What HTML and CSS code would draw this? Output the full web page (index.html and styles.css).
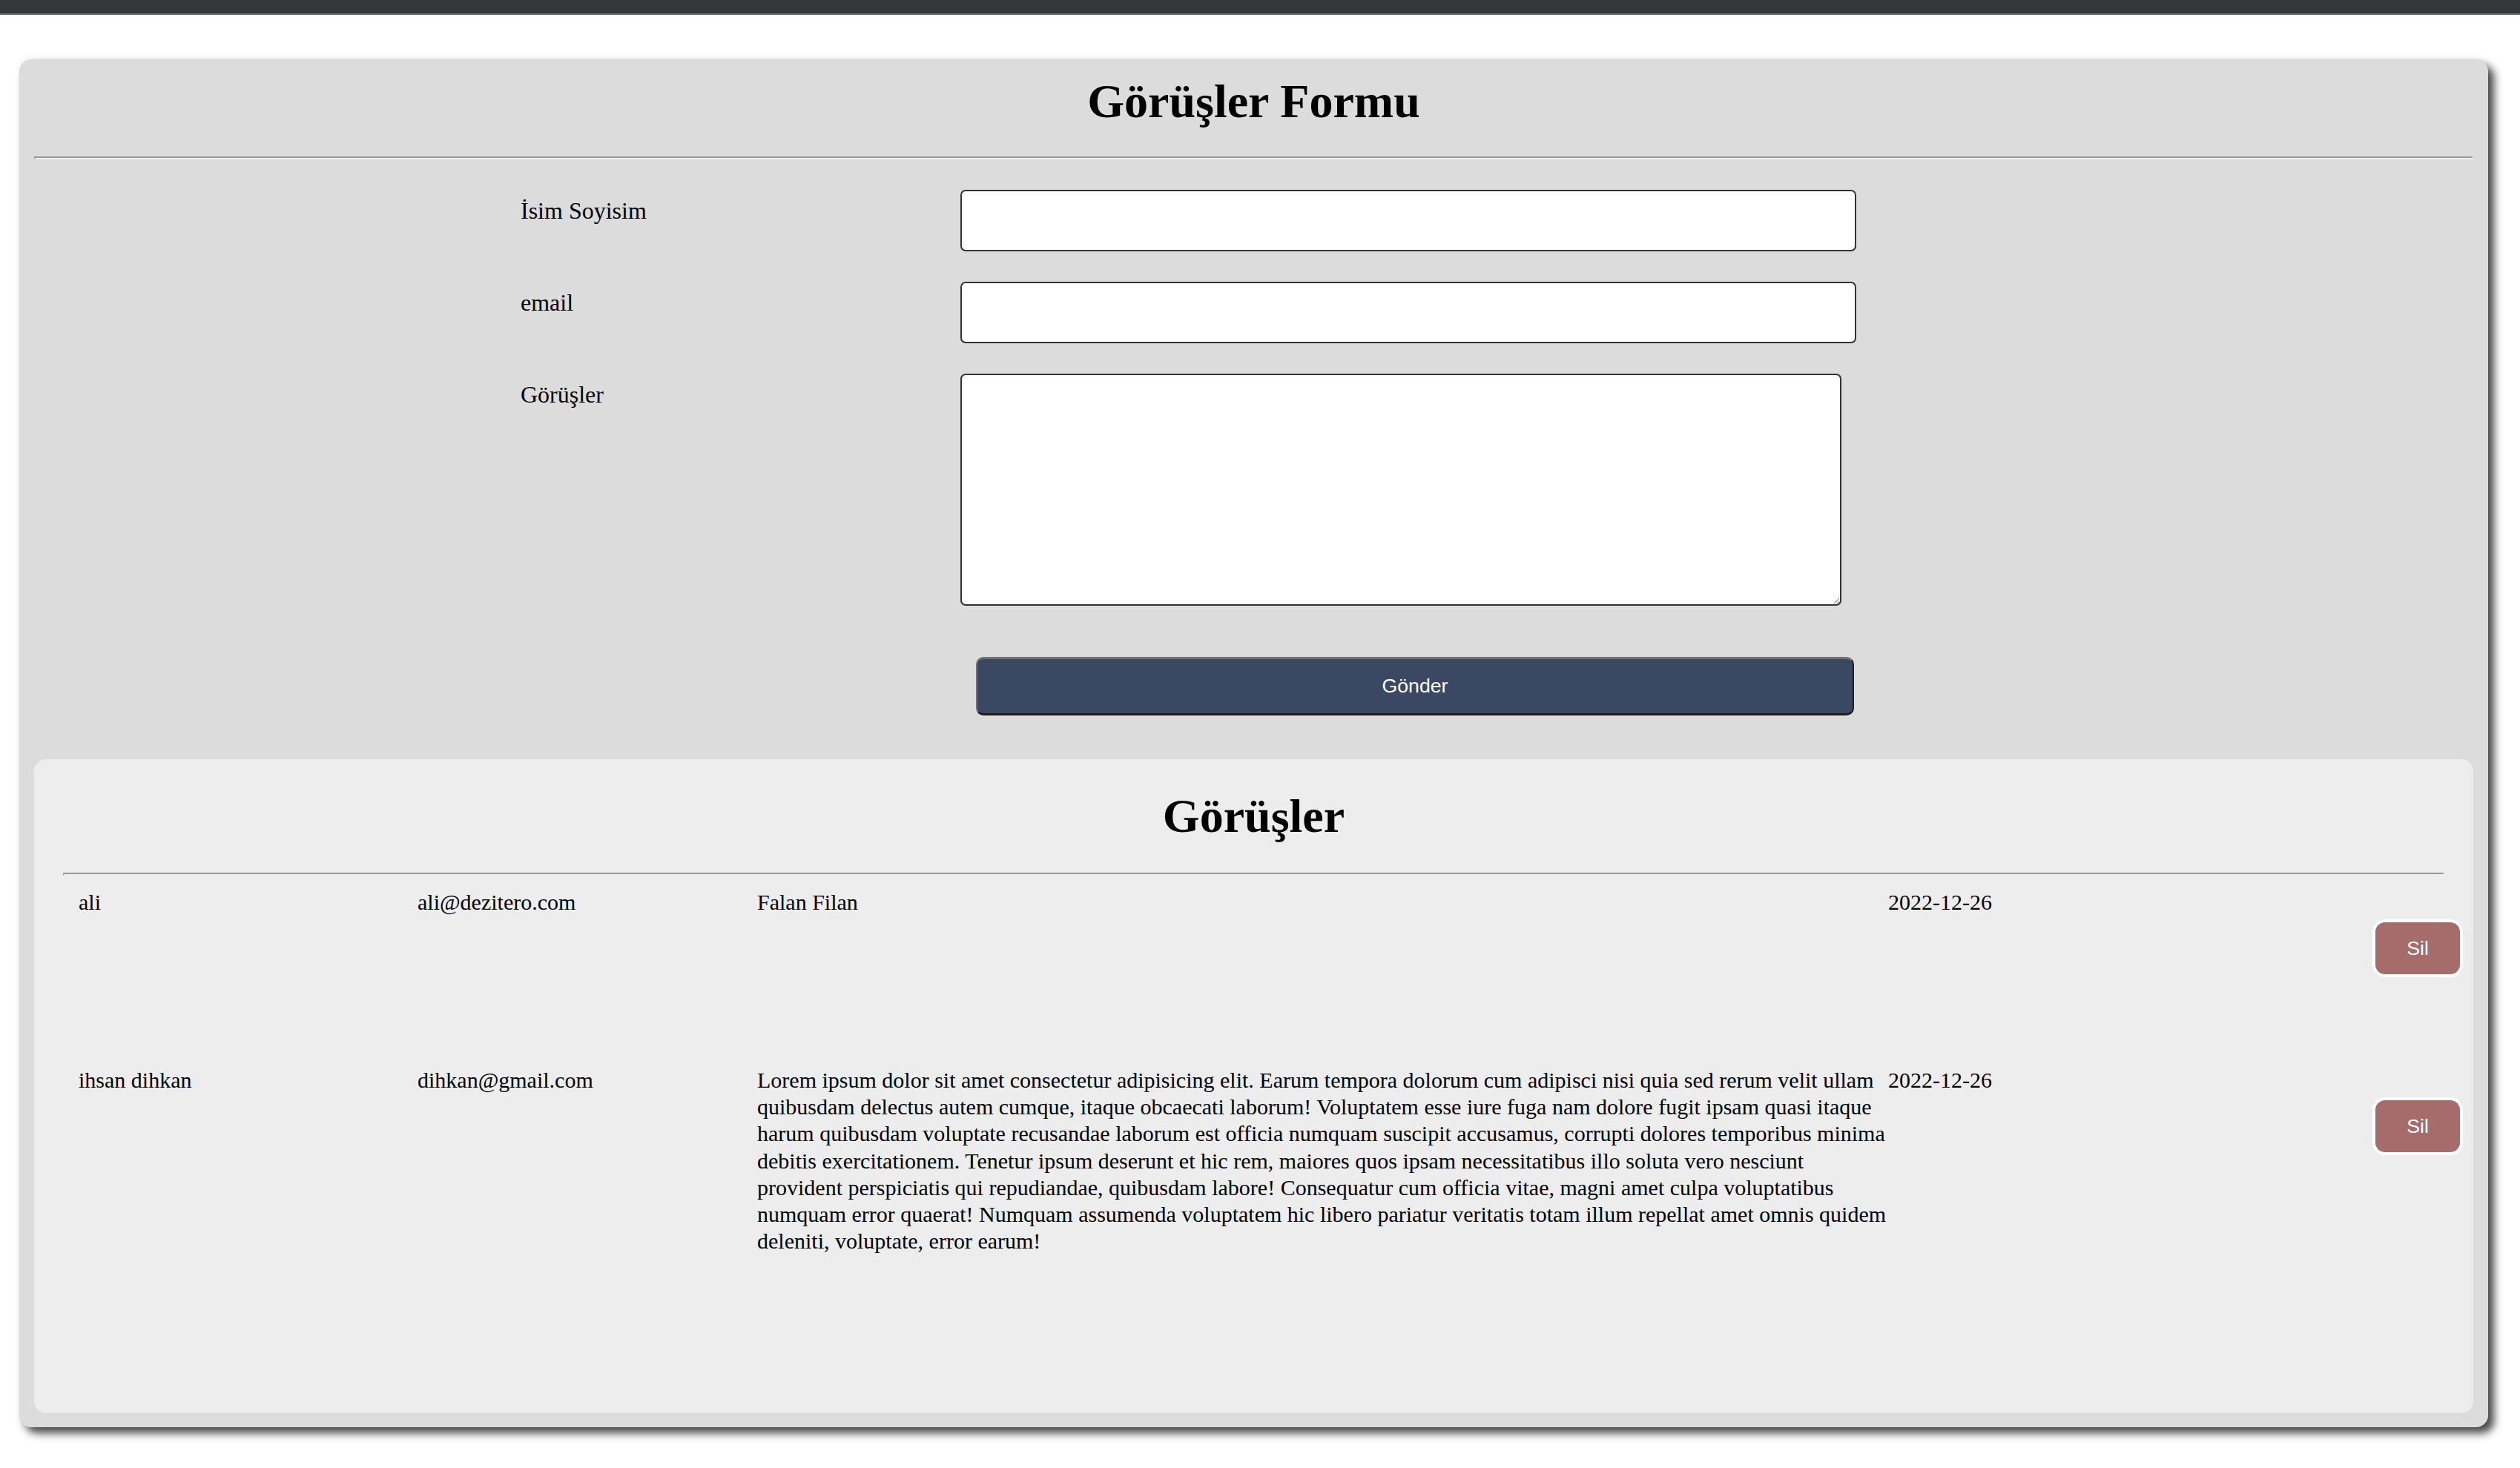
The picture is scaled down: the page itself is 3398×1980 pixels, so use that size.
FILE: index.html
```html
<!DOCTYPE html>
<html lang="tr">
<head>
<meta charset="utf-8">
<title>Görüşler Formu</title>
<link rel="stylesheet" href="styles.css">
</head>
<body>
<div class="topbar"></div>
<main class="card">
  <h1 class="title">Görüşler Formu</h1>
  <hr class="rule rule-form">
  <form class="form">
    <div class="field">
      <label class="label" for="name">İsim Soyisim</label>
      <input class="input" id="name" type="text">
    </div>
    <div class="field">
      <label class="label" for="email">email</label>
      <input class="input" id="email" type="text">
    </div>
    <div class="field">
      <label class="label" for="msg">Görüşler</label>
      <textarea class="textarea" id="msg"></textarea>
    </div>
    <div class="actions">
      <button class="submit" type="button">Gönder</button>
    </div>
  </form>
  <section class="list">
    <h2 class="title list-title">Görüşler</h2>
    <hr class="rule rule-list">
    <div class="row">
      <div class="cell">ali</div>
      <div class="cell">ali@dezitero.com</div>
      <div class="cell">Falan Filan</div>
      <div class="cell">2022-12-26</div>
      <div class="cell cell-action"><button class="delete" type="button">Sil</button></div>
    </div>
    <div class="row">
      <div class="cell">ihsan dihkan</div>
      <div class="cell">dihkan@gmail.com</div>
      <div class="cell">Lorem ipsum dolor sit amet consectetur adipisicing elit. Earum tempora dolorum cum adipisci nisi quia sed rerum velit ullam quibusdam delectus autem cumque, itaque obcaecati laborum! Voluptatem esse iure fuga nam dolore fugit ipsam quasi itaque harum quibusdam voluptate recusandae laborum est officia numquam suscipit accusamus, corrupti dolores temporibus minima debitis exercitationem. Tenetur ipsum deserunt et hic rem, maiores quos ipsam necessitatibus illo soluta vero nesciunt provident perspiciatis qui repudiandae, quibusdam labore! Consequatur cum officia vitae, magni amet culpa voluptatibus numquam error quaerat! Numquam assumenda voluptatem hic libero pariatur veritatis totam illum repellat amet omnis quidem deleniti, voluptate, error earum!</div>
      <div class="cell">2022-12-26</div>
      <div class="cell cell-action"><button class="delete" type="button">Sil</button></div>
    </div>
  </section>
</main>
</body>
</html>
```

FILE: styles.css
```css
html, body {
  margin: 0;
  padding: 0;
  background: #ffffff;
}

body {
  font-family: "Liberation Serif", "Times New Roman", serif;
  font-size: 32px;
  color: #000;
}

.topbar {
  height: 18px;
  background: #36373b;
  border-bottom: 2px solid #686868;
}

.card {
  box-sizing: border-box;
  width: 3329px;
  margin: 60px 0 60px 26px;
  padding: 20px 20px 19px;
  background: #dcdcdc;
  border-radius: 16px;
  box-shadow: 8px 8px 12px rgba(0, 0, 0, 0.72), 0 -2px 10px rgba(0, 0, 0, 0.05);
}

.title {
  margin: 0;
  font-size: 64px;
  font-weight: bold;
  line-height: normal;
  text-align: center;
}

.rule {
  height: 0;
  margin: 0;
  border-style: solid;
  border-width: 2px;
  border-color: #9a9a9a #efefef #efefef #9a9a9a;
}

.rule-form {
  margin-top: 37px;
}

.form {
  display: flex;
  flex-direction: column;
  gap: 41px;
  margin-top: 41px;
  padding-left: 656px;
}

.field {
  display: flex;
  align-items: flex-start;
}

.label {
  width: 593px;
  flex: none;
  padding-top: 10px;
  line-height: normal;
}

.input {
  box-sizing: border-box;
  width: 1208px;
  height: 83px;
  margin: 0;
  padding: 4px 10px;
  border: 2px solid #333;
  border-radius: 7px;
  background: #fff;
  font-family: "Liberation Sans", Arial, sans-serif;
  font-size: 26px;
}

.textarea {
  box-sizing: border-box;
  width: 1188px;
  height: 313px;
  margin: 0;
  padding: 4px;
  border: 2px solid #333;
  border-radius: 7px;
  background: #fff;
  font-family: "Liberation Mono", monospace;
  font-size: 26px;
}

.actions {
  margin-top: 28px;
  padding-left: 614px;
}

.submit {
  box-sizing: border-box;
  width: 1184px;
  height: 79px;
  margin: 0;
  padding: 0;
  background: #3a4864;
  color: #fff;
  border-style: solid;
  border-width: 3px 2px 3px 2px;
  border-color: #707070 #1e1e1e #1e1e1e #707070;
  border-radius: 10px;
  font-family: "Liberation Sans", Arial, sans-serif;
  font-size: 26.67px;
}

.list {
  margin-top: 59px;
  padding: 40px 39px 214px;
  background: #ededed;
  border-radius: 16px;
}

.rule-list {
  margin-top: 39px;
}

.row {
  box-sizing: border-box;
  display: grid;
  grid-template-columns: 457px 458px 1525px 653px 122px;
  align-items: start;
  min-height: 240px;
  padding: 18px 0 0 21px;
  font-size: 30px;
  line-height: 36.2px;
}

.cell-action {
  padding-top: 41px;
}

.delete {
  box-sizing: border-box;
  width: 122px;
  height: 78px;
  margin: 0;
  padding: 0;
  background: #a66b6b;
  color: #fff;
  border: 4px solid #fff;
  border-radius: 17px;
  font-family: "Liberation Sans", Arial, sans-serif;
  font-size: 26.67px;
}
```
